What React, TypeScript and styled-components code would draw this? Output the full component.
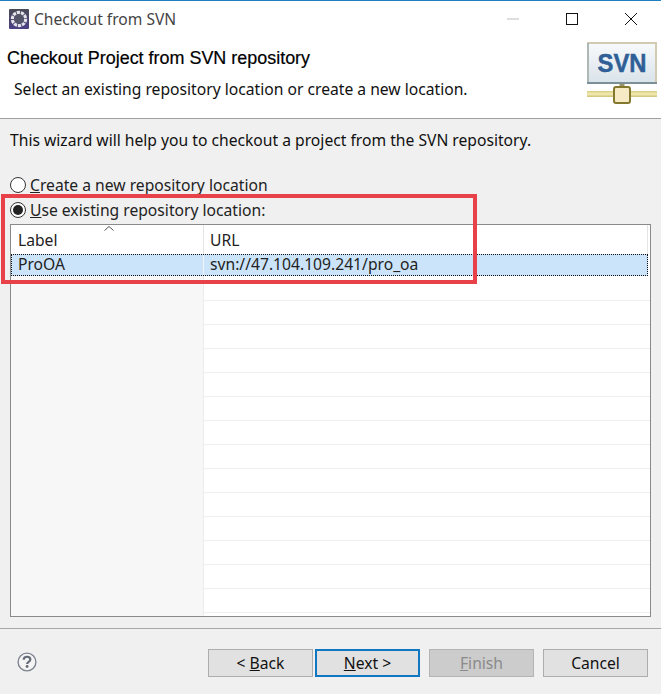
import React from 'react';
import styled, { createGlobalStyle } from 'styled-components';

const GlobalStyle = createGlobalStyle`
  html, body {
    margin: 0;
    padding: 0;
    background: #f0f0f0;
  }
`;

const gridRows = Array.from({ length: 14 });

export default function App() {
  return (
    <>
      <GlobalStyle />
      <Dialog>
        <TitleBar>
          <AppIcon viewBox="0 0 20 20">
            <defs>
              <linearGradient id="appBg" x1="0" y1="0" x2="0" y2="1">
                <stop offset="0" stopColor="#4a4a56" />
                <stop offset="1" stopColor="#4c3f86" />
              </linearGradient>
            </defs>
            <rect width="20" height="20" rx="1" fill="url(#appBg)" />
            <circle cx="10" cy="10" r="6.6" fill="none" stroke="#e6e6ea" strokeWidth="3.2" strokeDasharray="3.2 0.9" />
            <circle cx="10" cy="10" r="4.8" fill="#55556a" />
          </AppIcon>
          <WindowTitle>Checkout from SVN</WindowTitle>
          <WindowControls>
            <ControlIcon viewBox="0 0 12 12">
              <path d="M0 6h12" stroke="#bdbdbd" strokeWidth="1" />
            </ControlIcon>
            <ControlIcon viewBox="0 0 12 12">
              <rect x="0.5" y="0.5" width="11" height="11" fill="none" stroke="#111" strokeWidth="1" />
            </ControlIcon>
            <ControlIcon viewBox="0 0 12 12">
              <path d="M0 0L12 12M12 0L0 12" stroke="#111" strokeWidth="1" />
            </ControlIcon>
          </WindowControls>
        </TitleBar>
        <Banner>
          <BannerText>
            <BannerTitle>Checkout Project from SVN repository</BannerTitle>
            <BannerSub>Select an existing repository location or create a new location.</BannerSub>
          </BannerText>
          <SvnLogo viewBox="0 0 70 62">
            <defs>
              <linearGradient id="svnPanel" x1="0" y1="0" x2="0" y2="1">
                <stop offset="0" stopColor="#f8fafc" />
                <stop offset="1" stopColor="#d9e3ea" />
              </linearGradient>
              <linearGradient id="svnBar" x1="0" y1="0" x2="0" y2="1">
                <stop offset="0" stopColor="#d8cc80" />
                <stop offset="0.5" stopColor="#f3ecb4" />
                <stop offset="1" stopColor="#cfc274" />
              </linearGradient>
            </defs>
            <rect x="1" y="1" width="68" height="40" fill="url(#svnPanel)" stroke="#d3cab2" strokeWidth="2" />
            <path d="M1 1v41" stroke="#aeb9b6" strokeWidth="2" />
            <path d="M0 41h70" stroke="#7b8f96" strokeWidth="2" />
            <text x="35" y="30" textAnchor="middle" textLength="49" lengthAdjust="spacingAndGlyphs" fontFamily="'Liberation Sans', sans-serif" fontWeight="700" fontSize="26" fill="#2f5f96" stroke="#2f5f96" strokeWidth="0.5">SVN</text>
            <rect x="0" y="49" width="70" height="6" fill="url(#svnBar)" />
            <path d="M35 42v4" stroke="#9a9468" strokeWidth="5" />
            <rect x="27" y="45" width="16" height="16" rx="2" fill="#f6eac4" stroke="#84782f" strokeWidth="2" />
          </SvnLogo>
        </Banner>
        <Body>
          <Intro>This wizard will help you to checkout a project from the SVN repository.</Intro>
          <RadioGroup>
            <RadioRow>
              <Radio />
              <RadioLabel><u>C</u>reate a new repository location</RadioLabel>
            </RadioRow>
            <RadioRow>
              <Radio $checked />
              <RadioLabel><u>U</u>se existing repository location:</RadioLabel>
            </RadioRow>
          </RadioGroup>
          <Table>
            <HeaderRow>
              <HeaderCell $first>
                Label
                <SortArrow viewBox="0 0 10 5">
                  <path d="M0.5 4.5L5 0.5L9.5 4.5" fill="none" stroke="#555" strokeWidth="1" />
                </SortArrow>
              </HeaderCell>
              <HeaderCell>URL</HeaderCell>
            </HeaderRow>
            <SelectedRow>
              <Cell $first>ProOA</Cell>
              <Cell>svn://47.104.109.241/pro_oa</Cell>
            </SelectedRow>
            <EmptyRows>
              <LeftFill />
              <RightFill>
                {gridRows.map((_, i) => (
                  <GridRow key={i} />
                ))}
              </RightFill>
            </EmptyRows>
          </Table>
          <Highlight />
        </Body>
        <Footer>
          <HelpIcon viewBox="0 0 22 22">
            <circle cx="11" cy="11" r="9.8" fill="#f4f4f4" stroke="#7d8490" strokeWidth="1.5" />
            <path d="M7.4 8.6c0-2.2 1.6-3.4 3.7-3.4s3.6 1.2 3.6 3c0 2.6-3.6 2.6-3.6 4.9" fill="none" stroke="#656c78" strokeWidth="2.4" />
            <circle cx="11.1" cy="16" r="1.6" fill="#656c78" />
          </HelpIcon>
          <ButtonBar>
            <WizardButton>&lt; <u>B</u>ack</WizardButton>
            <WizardButton $primary><u>N</u>ext &gt;</WizardButton>
            <WizardButton $disabled $spaced><u>F</u>inish</WizardButton>
            <WizardButton $spaced>Cancel</WizardButton>
          </ButtonBar>
        </Footer>
      </Dialog>
    </>
  );
}

const Dialog = styled.div`
  width: 661px;
  height: 694px;
  display: flex;
  flex-direction: column;
  background: #f0f0f0;
  color: #111;
  font-family: "Noto Sans", "Open Sans", sans-serif;
  font-size: 15.66px;
  overflow: hidden;
`;

const TitleBar = styled.div`
  height: 36px;
  box-sizing: border-box;
  border-top: 1px solid #1f7fc0;
  background: #fff;
  display: flex;
  align-items: center;
  padding: 0 0 0 9px;
`;

const AppIcon = styled.svg`
  width: 20px;
  height: 20px;
`;

const WindowTitle = styled.div`
  margin-left: 5px;
  font-size: 15.6px;
  color: #444;
`;

const WindowControls = styled.div`
  margin-left: auto;
  display: flex;
  align-items: center;
  gap: 47px;
  padding-right: 24px;
`;

const ControlIcon = styled.svg`
  width: 12px;
  height: 12px;
`;

const Banner = styled.div`
  height: 83px;
  box-sizing: border-box;
  background: #fff;
  border-bottom: 1px solid #a0a0a0;
  display: flex;
  justify-content: space-between;
  padding: 0 4px 0 7px;
`;

const BannerText = styled.div`
  display: flex;
  flex-direction: column;
`;

const BannerTitle = styled.div`
  margin-top: 12px;
  font-family: "Liberation Sans", Arial, sans-serif;
  font-size: 17.95px;
  line-height: 20px;
  color: #000;
  -webkit-text-stroke: 0.2px #000;
`;

const BannerSub = styled.div`
  margin: 11px 0 0 7px;
  line-height: 20px;
`;

const SvnLogo = styled.svg`
  width: 70px;
  height: 62px;
  margin-top: 6px;
`;

const Body = styled.div`
  position: relative;
  flex: 1;
  padding: 0 10px;
  display: flex;
  flex-direction: column;
`;

const Intro = styled.div`
  margin-top: 11px;
  line-height: 20px;
`;

const RadioGroup = styled.div`
  margin-top: 25px;
  display: flex;
  flex-direction: column;
  gap: 5px;
`;

const RadioRow = styled.div`
  display: flex;
  align-items: center;
  height: 20px;
`;

const Radio = styled.span<{ $checked?: boolean }>`
  width: 16px;
  height: 16px;
  box-sizing: border-box;
  border: 1px solid #333;
  border-radius: 50%;
  background: #fff;
  display: flex;
  align-items: center;
  justify-content: center;
  &::after {
    content: "";
    display: ${(p) => (p.$checked ? 'block' : 'none')};
    width: 10px;
    height: 10px;
    border-radius: 50%;
    background: #222;
  }
`;

const RadioLabel = styled.span`
  margin-left: 4px;
  color: #222;
`;

const Table = styled.div`
  margin-top: 4px;
  width: 641px;
  height: 393px;
  box-sizing: border-box;
  border: 1px solid #8a8a8a;
  background: #fff;
  display: flex;
  flex-direction: column;
`;

const HeaderRow = styled.div`
  height: 29px;
  display: flex;
  flex-shrink: 0;
`;

const HeaderCell = styled.div<{ $first?: boolean }>`
  position: relative;
  box-sizing: border-box;
  padding: 5px 0 0 7px;
  line-height: 20px;
  color: #222;
  ${(p) => (p.$first ? 'width: 193px; border-right: 1px solid #e4e4e4;' : 'flex: 1; padding-left: 6px; border-right: 1px solid #e4e4e4; margin-right: 2px;')}
`;

const SortArrow = styled.svg`
  position: absolute;
  top: 1px;
  left: 93px;
  width: 10px;
  height: 5px;
`;

const SelectedRow = styled.div`
  height: 22px;
  flex-shrink: 0;
  margin-right: 2px;
  box-sizing: border-box;
  display: flex;
  background: #cce4f9;
  outline: 1px dotted #111;
  outline-offset: -1px;
`;

const Cell = styled.div<{ $first?: boolean }>`
  box-sizing: border-box;
  line-height: 21px;
  color: #222;
  ${(p) => (p.$first ? 'width: 193px; padding-left: 7px; border-right: 1px solid #eef4fa;' : 'flex: 1; padding-left: 6px;')}
`;

const EmptyRows = styled.div`
  flex: 1;
  display: flex;
  min-height: 0;
  overflow: hidden;
`;

const LeftFill = styled.div`
  width: 193px;
  background: #f7f7f7;
  border-right: 1px solid #ececec;
  box-sizing: border-box;
`;

const RightFill = styled.div`
  flex: 1;
  display: flex;
  flex-direction: column;
  padding-top: 1px;
`;

const GridRow = styled.div`
  height: 24px;
  box-sizing: border-box;
  border-bottom: 1px solid #efefef;
  flex-shrink: 0;
`;

const Highlight = styled.div`
  position: absolute;
  left: 1px;
  top: 75px;
  width: 476px;
  height: 90px;
  box-sizing: border-box;
  border: 4px solid #e8414a;
  pointer-events: none;
`;

const Footer = styled.div`
  height: 66px;
  flex-shrink: 0;
  box-sizing: border-box;
  border-top: 1px solid #a8a8a8;
  display: flex;
  align-items: flex-start;
  justify-content: space-between;
  padding: 20px 13px 0 17px;
`;

const HelpIcon = styled.svg`
  width: 20px;
  height: 20px;
  margin-top: 3px;
`;

const ButtonBar = styled.div`
  display: flex;
`;

const WizardButton = styled.div<{ $primary?: boolean; $disabled?: boolean; $spaced?: boolean }>`
  width: 105px;
  height: 28px;
  box-sizing: border-box;
  margin-left: ${(p) => (p.$spaced ? '9px' : p.$primary ? '2px' : '0')};
  border: ${(p) => (p.$primary ? '2px solid #0f78c0' : p.$disabled ? '1px solid #b4b4b4' : '1px solid #adadad')};
  background: ${(p) => (p.$disabled ? '#cccccc' : '#e1e1e1')};
  color: ${(p) => (p.$disabled ? '#8a8a8a' : '#111')};
  display: flex;
  align-items: center;
  justify-content: center;
  white-space: pre;
`;
